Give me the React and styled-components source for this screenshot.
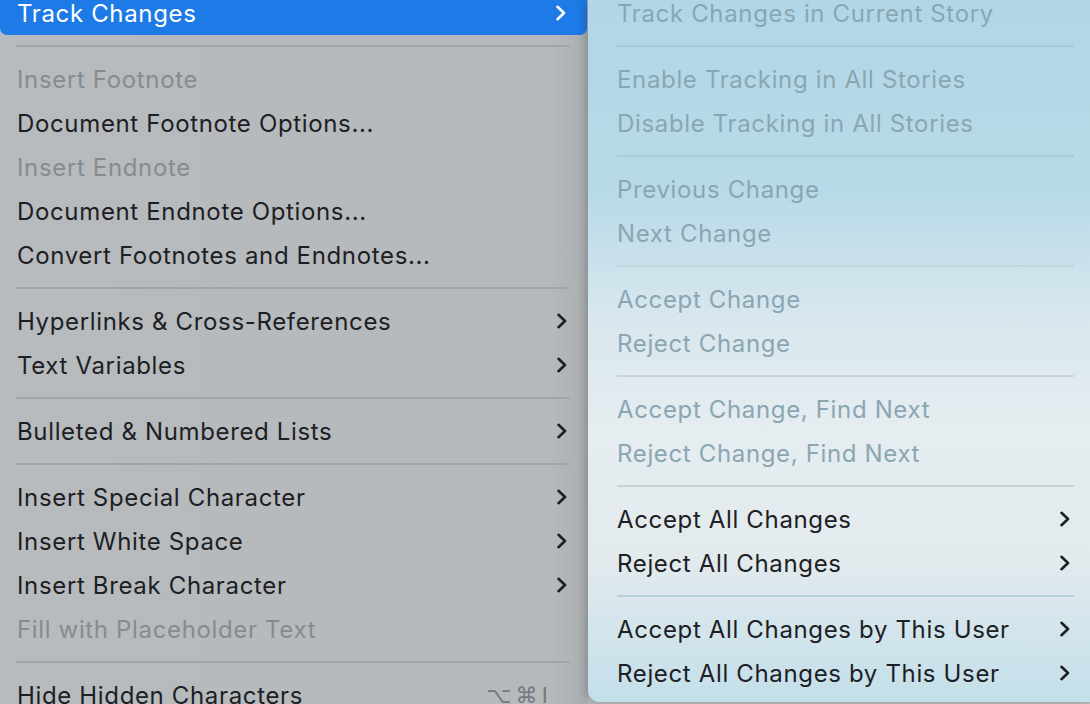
import React from "react";
import styled, { createGlobalStyle } from "styled-components";

const Global = createGlobalStyle`
  html, body { margin: 0; padding: 0; width: 1090px; height: 704px; overflow: hidden; background: #b6babd; }
  #root { width: 1090px; height: 704px; }
`;

const Page = styled.div`
  display: flex;
  width: 1090px;
  height: 704px;
  overflow: hidden;
  font-family: Inter, "DejaVu Sans", sans-serif;
  font-size: 24px;
  -webkit-font-smoothing: antialiased;
`;

const MainMenu = styled.div`
  width: 588px;
  flex: none;
  height: 704px;
  background: linear-gradient(90deg, #b7bbbe 0%, #b5b9bc 94%, #a9adb0 100%);
  display: flex;
  flex-direction: column;
`;

const SubMenu = styled.div`
  flex: 1;
  height: 702px;
  border-bottom-left-radius: 12px;
  box-shadow: -3px 0 8px rgba(0, 0, 0, 0.18);
  background:
    radial-gradient(ellipse 260px 320px at 1090px 430px, rgba(214, 212, 234, 0.85), rgba(214, 212, 234, 0) 100%),
    linear-gradient(180deg, #b1d6e7 0%, #b9dae8 28%, #d8e7ee 45%, #e6edf0 62%, #e2eaee 80%, #c3dfea 100%);
  display: flex;
  flex-direction: column;
  padding-left: 29px;
  padding-right: 16px;
  z-index: 1;
`;

const List = styled.div`
  display: flex;
  flex-direction: column;
  margin-top: -9px;
`;

const Row = styled.div`
  height: 44px;
  flex: none;
  display: flex;
  align-items: center;
  justify-content: space-between;
  color: ${(p) => (p.$disabled ? p.$dimColor : "#1d2023")};
  letter-spacing: 0.65px;
  white-space: nowrap;
`;

const MainRow = styled(Row)`
  padding: 0 20px 0 17px;
  ${(p) =>
    p.$active &&
    `
    background: #1d7ae6;
    color: #ffffff;
    border-radius: 0 0 7px 7px;
    margin-right: 1px;
  `}
`;

const SubRow = styled(Row)`
  padding: 0 3px 0 0;
`;

const Sep = styled.div`
  height: 22px;
  flex: none;
  display: flex;
  align-items: center;
  padding: ${(p) => p.$pad};
  &::after {
    content: "";
    display: block;
    height: 2px;
    width: 100%;
    background: ${(p) => p.$color};
  }
`;

const Shortcut = styled.span`
  font-family: "DejaVu Sans", sans-serif;
  font-size: 22px;
  color: #75797d;
  letter-spacing: 4px;
  margin-right: 16px;
`;

const Chevron = ({ color }) => (
  <svg width="12" height="16" viewBox="0 0 12 16" style={{ flex: "none" }}>
    <path d="M2.5 1.8 L9 8 L2.5 14.2" fill="none" stroke={color} strokeWidth="2.6" strokeLinecap="round" strokeLinejoin="round" />
  </svg>
);

const main = [
  { t: "Track Changes", sub: true, active: true },
  { sep: true },
  { t: "Insert Footnote", dis: true },
  { t: "Document Footnote Options..." },
  { t: "Insert Endnote", dis: true },
  { t: "Document Endnote Options..." },
  { t: "Convert Footnotes and Endnotes..." },
  { sep: true },
  { t: "Hyperlinks & Cross-References", sub: true },
  { t: "Text Variables", sub: true },
  { sep: true },
  { t: "Bulleted & Numbered Lists", sub: true },
  { sep: true },
  { t: "Insert Special Character", sub: true },
  { t: "Insert White Space", sub: true },
  { t: "Insert Break Character", sub: true },
  { t: "Fill with Placeholder Text", dis: true },
  { sep: true },
  { t: "Hide Hidden Characters", sc: "⌥⌘I" },
];

const sub = [
  { t: "Track Changes in Current Story", dis: true },
  { sep: true },
  { t: "Enable Tracking in All Stories", dis: true },
  { t: "Disable Tracking in All Stories", dis: true },
  { sep: true },
  { t: "Previous Change", dis: true },
  { t: "Next Change", dis: true },
  { sep: true },
  { t: "Accept Change", dis: true },
  { t: "Reject Change", dis: true },
  { sep: true },
  { t: "Accept Change, Find Next", dis: true },
  { t: "Reject Change, Find Next", dis: true },
  { sep: true },
  { t: "Accept All Changes", sub: true },
  { t: "Reject All Changes", sub: true },
  { sep: true },
  { t: "Accept All Changes by This User", sub: true },
  { t: "Reject All Changes by This User", sub: true },
];

const subSepColors = ["#a6c8d7", "#a9cad8", "#c4d3da", "#c9d2d8", "#c8d0d8", "#b9cfd9"];

export default function App() {
  let sepIdx = 0;
  return (
    <>
      <Global />
      <Page>
        <MainMenu>
          <List>
            {main.map((it, i) =>
              it.sep ? (
                <Sep key={i} $pad="0 18px 0 16px" $color="#a2a6a9" />
              ) : (
                <MainRow key={i} $active={it.active} $disabled={it.dis} $dimColor="#878b8f">
                  <span>{it.t}</span>
                  {it.sub && <Chevron color={it.active ? "#ffffff" : "#1d2023"} />}
                  {it.sc && <Shortcut>{it.sc}</Shortcut>}
                </MainRow>
              )
            )}
          </List>
        </MainMenu>
        <SubMenu>
          <List>
            {sub.map((it, i) =>
              it.sep ? (
                <Sep key={i} $pad="0 0 0 -1px" $color={subSepColors[sepIdx++]} />
              ) : (
                <SubRow key={i} $disabled={it.dis} $dimColor="#8aa6b3">
                  <span>{it.t}</span>
                  {it.sub && <Chevron color="#1d2023" />}
                </SubRow>
              )
            )}
          </List>
        </SubMenu>
      </Page>
    </>
  );
}
